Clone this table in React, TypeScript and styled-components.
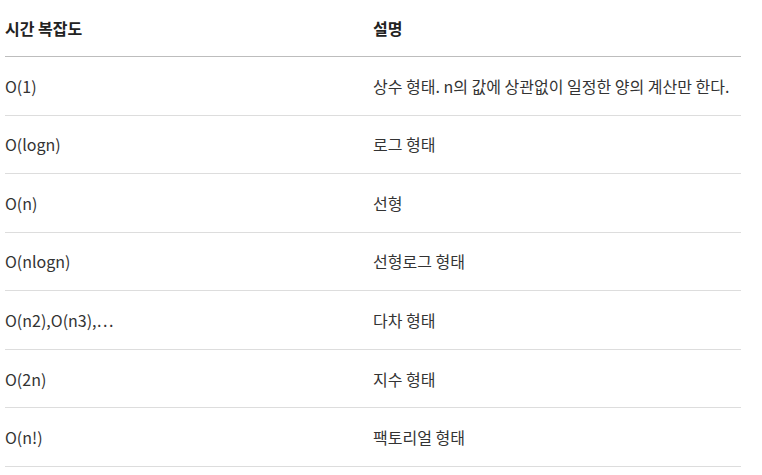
import React from "react";
import styled, { createGlobalStyle } from "styled-components";

const GlobalStyle = createGlobalStyle`
  html, body {
    margin: 0;
    padding: 0;
    background: #ffffff;
  }
  body {
    font-family: "Noto Sans CJK KR", "Noto Sans", sans-serif;
    color: #333333;
  }
`;

const rows: [string, string][] = [
  ["O(1)", "상수 형태. n의 값에 상관없이 일정한 양의 계산만 한다."],
  ["O(logn)", "로그 형태"],
  ["O(n)", "선형"],
  ["O(nlogn)", "선형로그 형태"],
  ["O(n2),O(n3),⋯", "다차 형태"],
  ["O(2n)", "지수 형태"],
  ["O(n!)", "팩토리얼 형태"],
];

const Table = styled.div`
  width: 736px;
  margin-left: 5px;
  display: flex;
  flex-direction: column;
`;

const Row = styled.div<{ $head?: boolean }>`
  display: grid;
  grid-template-columns: 368px 1fr;
  align-items: center;
  height: ${(p) => (p.$head ? "56px" : "57.57px")};
  border-bottom: 1px solid ${(p) => (p.$head ? "#bdbdbd" : "#dddddd")};
`;

const Cell = styled.div<{ $head?: boolean }>`
  font-size: 16px;
  line-height: 24px;
  font-weight: ${(p) => (p.$head ? 700 : 400)};
  color: ${(p) => (p.$head ? "#222222" : "#333333")};
  white-space: nowrap;
`;

export default function App() {
  return (
    <>
      <GlobalStyle />
      <Table>
        <Row $head>
          <Cell $head>시간 복잡도</Cell>
          <Cell $head>설명</Cell>
        </Row>
        {rows.map(([o, desc]) => (
          <Row key={o}>
            <Cell>{o}</Cell>
            <Cell>{desc}</Cell>
          </Row>
        ))}
      </Table>
    </>
  );
}
